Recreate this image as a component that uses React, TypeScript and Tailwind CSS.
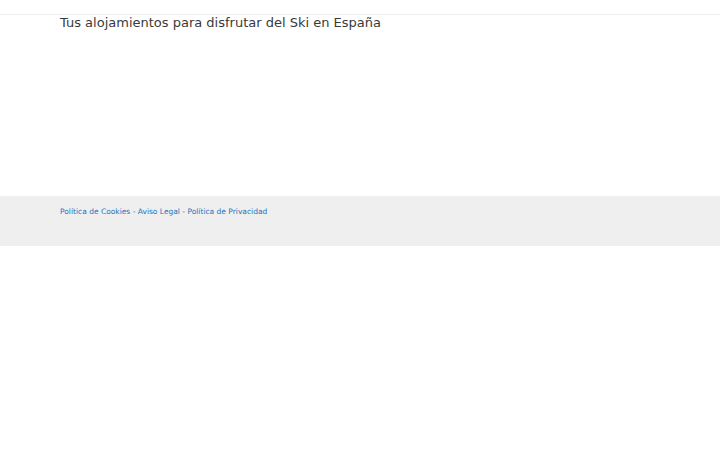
export default function App() {
  return (
    <div className="min-h-[450px] bg-white" style={{ fontFamily: '"DejaVu Sans", sans-serif' }}>
      <header className="h-[15px] border-b border-[#eeeeee]" />
      <main className="h-[181px] px-[60px]">
        <h1 className="text-[13px] leading-[15px] text-[#3a3a3a]">
          Tus alojamientos para disfrutar del Ski en España
        </h1>
      </main>
      <footer className="h-[50px] bg-[#efefef] px-[60px] pt-[10px]">
        <p className="text-[7.5px] leading-[12px] text-[#1e73be]">
          <a href="#">Política de Cookies</a> - <a href="#">Aviso Legal</a> -{' '}
          <a href="#">Política de Privacidad</a>
        </p>
      </footer>
    </div>
  );
}
